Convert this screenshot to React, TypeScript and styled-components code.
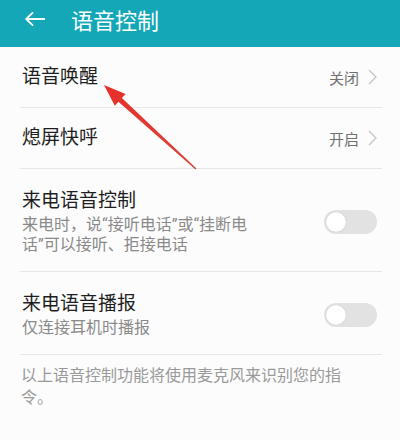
import * as React from "react";
import styled, { createGlobalStyle } from "styled-components";

const GlobalStyle = createGlobalStyle`
  html, body {
    margin: 0;
    padding: 0;
    background: #fcfcfc;
  }
  body {
    font-family: Roboto, "Noto Sans CJK SC", sans-serif;
  }
`;

type LinkItem = { title: string; value: string };
type SwitchItem = { title: string; desc: string; on: boolean };

const links: LinkItem[] = [
  { title: "语音唤醒", value: "关闭" },
  { title: "熄屏快呼", value: "开启" },
];

const switches: SwitchItem[] = [
  {
    title: "来电语音控制",
    desc: "来电时，说“接听电话”或“挂断电话”可以接听、拒接电话",
    on: false,
  },
  { title: "来电语音播报", desc: "仅连接耳机时播报", on: false },
];

const BackIcon = () => (
  <BackSvg width="20" height="14" viewBox="0 0 20 14" fill="none">
    <path
      d="M19.5 7H1.2M7.5 0.8L1.2 7l6.3 6.2"
      stroke="#fff"
      strokeWidth="1.8"
      strokeLinecap="round"
      strokeLinejoin="round"
    />
  </BackSvg>
);

const Chevron = () => (
  <svg width="9" height="16" viewBox="0 0 9 16" fill="none">
    <path d="M1 1l7 7-7 7" stroke="#c4c4c4" strokeWidth="1.3" />
  </svg>
);

// red annotation arrow drawn over the list
const Annotation = () => (
  <Overlay viewBox="0 0 400 440">
    <defs>
      <linearGradient id="arrowRed" x1="104" y1="85" x2="196" y2="169" gradientUnits="userSpaceOnUse">
        <stop offset="0" stopColor="#e82e28" />
        <stop offset="1" stopColor="#d6463e" />
      </linearGradient>
    </defs>
    <polygon
      points="104,85 125.6,93.9 121.9,97.9 196.5,168.5 195.5,169.5 118.4,101.7 114.8,105.7"
      fill="url(#arrowRed)"
    />
  </Overlay>
);

export default function App() {
  return (
    <Page>
      <GlobalStyle />
      <Header>
        <BackIcon />
        <HeaderTitle>语音控制</HeaderTitle>
      </Header>
      <List>
        {links.map((item) => (
          <LinkRow key={item.title}>
            <Title>{item.title}</Title>
            <Value>
              {item.value}
              <Chevron />
            </Value>
          </LinkRow>
        ))}
        {switches.map((item) => (
          <SwitchRow key={item.title}>
            <TextBlock>
              <Title>{item.title}</Title>
              <Desc>{item.desc}</Desc>
            </TextBlock>
            <Toggle data-on={item.on}>
              <Knob />
            </Toggle>
          </SwitchRow>
        ))}
      </List>
      <Footer>以上语音控制功能将使用麦克风来识别您的指令。</Footer>
      <Annotation />
    </Page>
  );
}

const Page = styled.div`
  position: relative;
  width: 400px;
  height: 440px;
  overflow: hidden;
  background: #fcfcfc;
`;

const Header = styled.div`
  display: flex;
  align-items: center;
  height: 47px;
  box-sizing: border-box;
  padding: 0 0 4px 25px;
  background: #13a7b7;
`;

const BackSvg = styled.svg`
  flex: none;
  margin-bottom: 6px;
`;

const HeaderTitle = styled.div`
  margin-left: 26px;
  color: #fff;
  font-size: 22px;
  line-height: 30px;
`;

const List = styled.div`
  display: flex;
  flex-direction: column;
`;

const Row = styled.div`
  display: flex;
  align-items: center;
  justify-content: space-between;
  margin: 0 18px 0 20px;
  padding: 0 5px 0 2px;
  border-bottom: 1px solid #e6e6e6;
`;

const LinkRow = styled(Row)`
  height: 60px;
`;

const SwitchRow = styled(Row)`
  padding-top: 20px;
  padding-bottom: 16px;
`;

const TextBlock = styled.div`
  display: flex;
  flex-direction: column;
  gap: 2px;
`;

const Title = styled.div`
  color: #1e1e1e;
  font-size: 19px;
  line-height: 24px;
`;

const Desc = styled.div`
  max-width: 238px;
  color: #8a8a8a;
  font-size: 16px;
  line-height: 20px;
`;

const Value = styled.div`
  display: flex;
  align-items: center;
  gap: 9px;
  color: #707070;
  font-size: 15px;
`;

const Toggle = styled.div`
  flex: none;
  position: relative;
  width: 53px;
  height: 24px;
  border-radius: 12px;
  background: #e2e2e2;

  &[data-on="true"] {
    background: #13a7b7;
  }
`;

const Knob = styled.div`
  position: absolute;
  top: 2px;
  left: 2px;
  width: 20px;
  height: 20px;
  border-radius: 50%;
  background: #fff;
  box-shadow: 0 0 1px rgba(0, 0, 0, 0.25);
`;

const Footer = styled.div`
  padding: 10px 0 0 21px;
  width: 328px;
  color: #9a9a9a;
  font-size: 16px;
  line-height: 22px;
`;

const Overlay = styled.svg`
  position: absolute;
  inset: 0;
  width: 400px;
  height: 440px;
  pointer-events: none;
`;
